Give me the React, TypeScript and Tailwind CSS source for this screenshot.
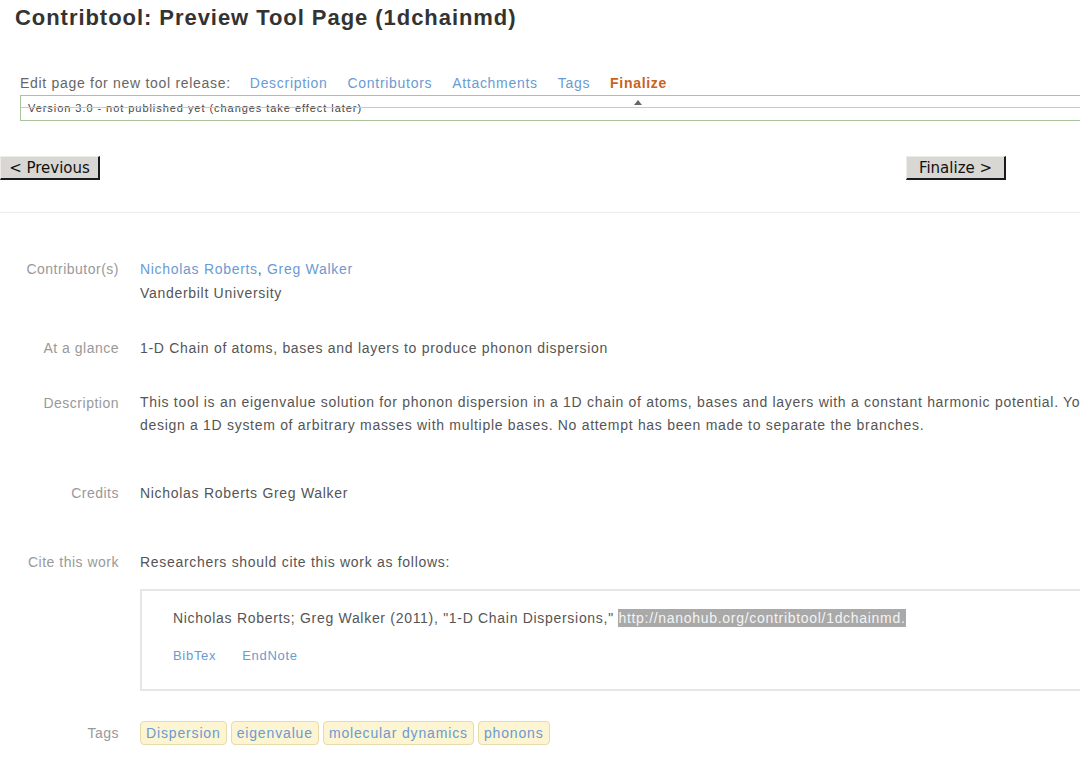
const navLinks = ["Description", "Contributors", "Attachments", "Tags"];
const tags = ["Dispersion", "eigenvalue", "molecular dynamics", "phonons"];

const Row = (props: { label: string; className?: string; children: React.ReactNode }) => {
  const { label, className, children } = props;
  return (
    <div className={`flex text-[14px] leading-[24px] ${className || ""}`}>
      <div className="w-[119px] shrink-0 text-right text-[#999] tracking-[0.5px]">{label}</div>
      <div className="ml-[21px] w-[1040px] text-[#555]">{children}</div>
    </div>
  );
};

const Button = (props: { children: React.ReactNode; className?: string }) => (
  <button
    className={`h-[24px] pt-[1px] bg-[#d8d7d3] border-t border-l border-[#ecebe8] border-b-2 border-r-2 border-b-[#1a1a1a] border-r-[#1a1a1a] text-[15px] leading-[20px] tracking-normal text-[#111] font-['DejaVu_Sans',sans-serif] ${props.className || ""}`}
  >
    {props.children}
  </button>
);

export default function App() {
  return (
    <div className="w-[1080px] h-[782px] overflow-hidden bg-white font-['Liberation_Sans',Arial,sans-serif] tracking-[0.7px]">
      <div className="w-[1240px]">
        <h1 className="pl-[15px] pt-[4px] text-[22px] leading-[28px] font-bold tracking-[0.95px] text-[#333]">
          Contribtool: Preview Tool Page (1dchainmd)
        </h1>

        <div className="mt-[41px] flex items-center gap-[20px] pl-[20px] text-[14px] leading-[20px]">
          <span className="text-[#666] mr-[-1px]">Edit page for new tool release:</span>
          {navLinks.map((l) => (
            <a key={l} className="text-[#6a9bd3]">
              {l}
            </a>
          ))}
          <span className="font-bold text-[#c8631b]">Finalize</span>
        </div>

        <div className="relative ml-[20px] mt-[2px] h-[26px] border border-[#a9c39b]">
          <div className="pl-[7px] pt-[5px] text-[11px] leading-[14px] tracking-[0.95px] text-[#444]">
            Version 3.0 - not published yet (changes take effect later)
          </div>
          <div className="absolute left-0 right-0 top-[11px] h-px bg-[#c9c9c9]" />
          <div className="absolute left-[613px] top-[4px] w-0 h-0 border-l-[4px] border-r-[4px] border-b-[5px] border-l-transparent border-r-transparent border-b-[#666]" />
        </div>

        <div className="mt-[35px] flex w-[1006px] justify-between">
          <Button className="w-[100px]">&lt; Previous</Button>
          <Button className="w-[100px]">Finalize &gt;</Button>
        </div>

        <div className="mt-[32px] h-px bg-[#ececec]" />

        <Row label="Contributor(s)" className="mt-[44px]">
          <div>
            <a className="text-[#6a9bd3]">Nicholas Roberts</a>, <a className="text-[#6a9bd3]">Greg Walker</a>
          </div>
          <div>Vanderbilt University</div>
        </Row>

        <Row label="At a glance" className="mt-[31px]">
          1-D Chain of atoms, bases and layers to produce phonon dispersion
        </Row>

        <Row label="Description" className="mt-[31px]">
          <p className="w-[1000px] leading-[23px]">
            This tool is an eigenvalue solution for phonon dispersion in a 1D chain of atoms, bases and layers
            with a constant harmonic potential. You can design a 1D system of arbitrary masses with multiple
            bases. No attempt has been made to separate the branches.
          </p>
        </Row>

        <Row label="Credits" className="mt-[44px]">
          Nicholas Roberts Greg Walker
        </Row>

        <Row label="Cite this work" className="mt-[45px]">
          <div>Researchers should cite this work as follows:</div>
          <div className="mt-[15px] h-[102px] border-2 border-[#e6e6e6] pl-[31px] pt-[15px]">
            <div className="leading-[24px]">
              Nicholas Roberts; Greg Walker (2011), "1-D Chain Dispersions,"{" "}
              <span className="bg-[#a9a9a9] text-[#f4f4f4] py-[1px]">http://nanohub.org/contribtool/1dchainmd.</span>
            </div>
            <div className="mt-[16px] flex gap-[26px] text-[13px] leading-[20px] text-[#6a9bd3]">
              <a>BibTex</a>
              <a>EndNote</a>
            </div>
          </div>
        </Row>

        <div className="mt-[30px] flex items-center text-[14px]">
          <div className="w-[119px] text-right text-[#999] tracking-[0.5px]">Tags</div>
          <div className="ml-[21px] flex gap-[4px]">
            {tags.map((t) => (
              <span
                key={t}
                className="h-[24px] rounded-[4px] border border-[#e6dbab] bg-[#fdf4d2] px-[5px] leading-[22px] tracking-[0.85px] text-[#6a9bd3]"
              >
                {t}
              </span>
            ))}
          </div>
        </div>
      </div>
    </div>
  );
}
